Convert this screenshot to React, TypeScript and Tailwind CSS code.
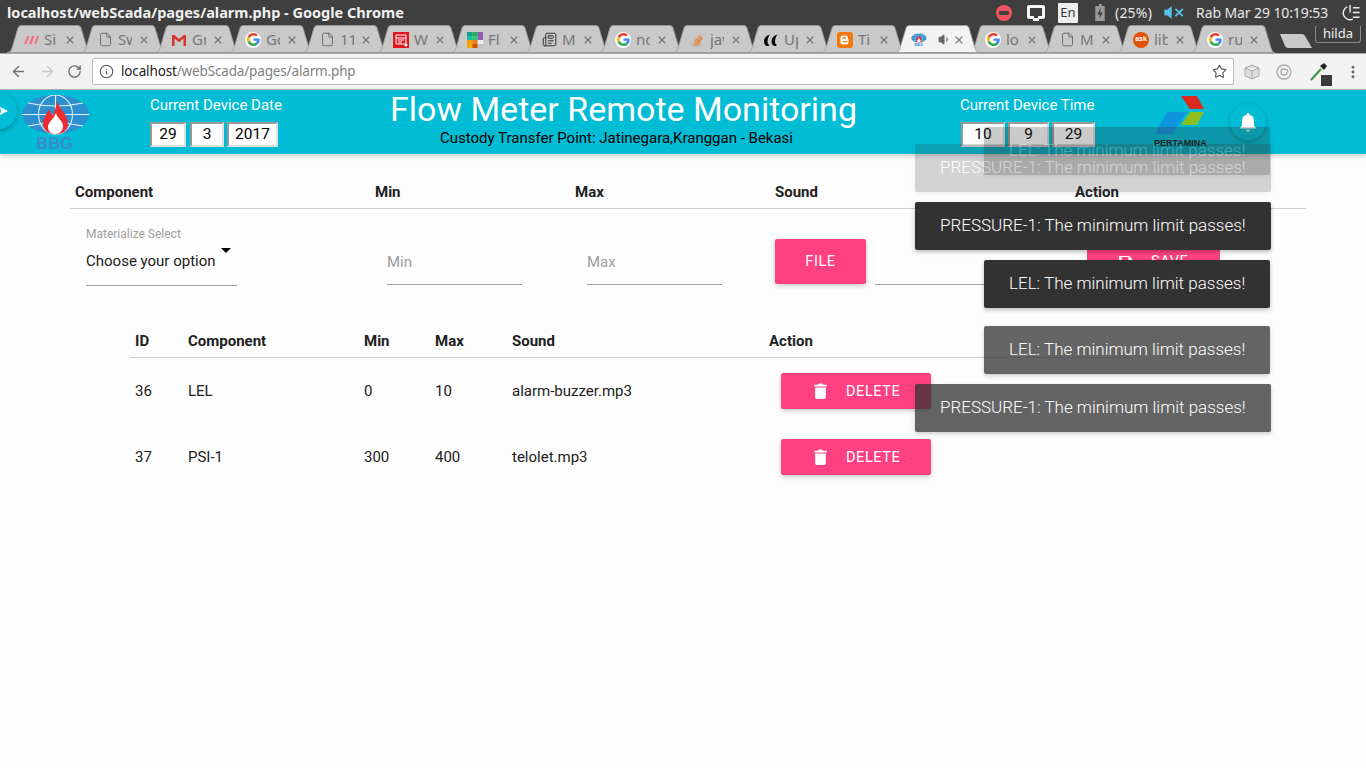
import { ArrowLeft, ArrowRight, File, Info, MoreVertical, Newspaper, RotateCw, Star, Volume1, X } from "lucide-react";
import type { ReactNode } from "react";

function GoogleIcon() {
  return (
    <span className="flex h-4 w-4 items-center justify-center rounded-full bg-white">
      <svg viewBox="0 0 48 48" className="h-[13px] w-[13px]">
        <path fill="#EA4335" d="M24 9.5c3.5 0 6.7 1.2 9.2 3.6l6.9-6.9C35.9 2.4 30.5 0 24 0 14.6 0 6.5 5.4 2.6 13.2l8 6.2C12.4 13.7 17.7 9.5 24 9.5z" />
        <path fill="#4285F4" d="M46.98 24.55c0-1.57-.15-3.09-.38-4.55H24v9.02h12.94c-.58 2.96-2.26 5.48-4.78 7.18l7.73 6c4.51-4.18 7.09-10.36 7.09-17.65z" />
        <path fill="#FBBC05" d="M10.53 28.59c-.48-1.45-.76-2.99-.76-4.59s.27-3.14.76-4.59l-7.98-6.19C.92 16.46 0 20.12 0 24c0 3.88.92 7.54 2.56 10.78l7.97-6.19z" />
        <path fill="#34A853" d="M24 48c6.48 0 11.93-2.13 15.89-5.81l-7.73-6c-2.15 1.45-4.92 2.3-8.16 2.3-6.26 0-11.57-4.22-13.47-9.91l-7.98 6.19C6.51 42.62 14.62 48 24 48z" />
      </svg>
    </span>
  );
}

function PageIcon() {
  return <File className="h-[15px] w-[15px] text-[#5a5a5a]" strokeWidth={1.3} />;
}

function BbgLogo({ small }: { small?: boolean }) {
  return (
    <svg viewBox="0 0 70 56" className={small ? "h-4 w-4" : "h-[56px] w-[70px]"}>
      <ellipse cx="34.5" cy="19.5" rx="33.5" ry="19.5" fill="#2b8fd0" />
      <g fill="none" stroke="#e4f3fb" strokeWidth="1.1">
        <ellipse cx="34.5" cy="19.5" rx="17" ry="19.5" />
        <path d="M34.5 0v39M1 19.5h67M7 8q27 6 55 0M7 31q27-6 55 0" />
      </g>
      <path d="M36 5C37 13 47 19 47 29 47 36 41 39 34 39 27 39 22 35 22 28 22 22 26 19 28 14 29 17 30 19 32 20 34 15 36 10 36 5Z" fill="#ee2b30" />
      <path d="M35 18C36 23 42 26 42 31 42 36 38 39 34 39 30 39 27 36 27 32 27 27 33 24 35 18Z" fill="#fff" />
      <text x="34" y="54" textAnchor="middle" fontFamily="Liberation Sans, sans-serif" fontWeight="700" fontSize="16" letterSpacing="0.5" fill="#3f88cc">BBG</text>
    </svg>
  );
}

const tabs: { label: string; icon: ReactNode }[] = [
  {
    label: "Si",
    icon: (
      <svg viewBox="0 0 16 16" className="h-4 w-4">
        <path d="M1 12 4 4h2.5l-3 8zM6 12l3-8h2.5l-3 8zM11 12l3-8h2l-3 8z" fill="#f4727f" />
      </svg>
    ),
  },
  { label: "Sw", icon: <PageIcon /> },
  {
    label: "Gr",
    icon: (
      <svg viewBox="0 0 16 16" className="h-4 w-4">
        <path d="M1 3h2.4L8 7l4.6-4H15v11h-2.5V6.5L8 10.3 3.5 6.5V14H1z" fill="#d0392b" />
      </svg>
    ),
  },
  { label: "Go", icon: <GoogleIcon /> },
  { label: "11", icon: <PageIcon /> },
  {
    label: "W",
    icon: (
      <svg viewBox="0 0 16 16" className="h-4 w-4">
        <rect width="16" height="16" fill="#e0141f" />
        <path d="M3 3h10v9H3z" fill="none" stroke="#fff" strokeWidth="1" />
        <path d="M3 6h10M5 8h6M5 10h4" stroke="#fff" strokeWidth="1" />
        <circle cx="13" cy="13" r="1.5" fill="#fff" />
      </svg>
    ),
  },
  {
    label: "Fl",
    icon: (
      <svg viewBox="0 0 16 16" className="h-4 w-4">
        <rect x="0" y="0" width="5.4" height="4" fill="#16a085" />
        <rect x="5.4" y="0" width="5.3" height="4" fill="#27ae60" />
        <rect x="10.7" y="0" width="5.3" height="4" fill="#8e5bb5" />
        <rect x="0" y="4" width="5.4" height="4" fill="#1abc9c" />
        <rect x="5.4" y="4" width="5.3" height="4" fill="#2ecc71" />
        <rect x="10.7" y="4" width="5.3" height="4" fill="#9b59b6" />
        <rect x="0" y="8" width="5.4" height="4" fill="#f39c12" />
        <rect x="5.4" y="8" width="5.3" height="4" fill="#e67e22" />
        <rect x="10.7" y="8" width="5.3" height="4" fill="#ecf0f1" />
        <rect x="0" y="12" width="5.4" height="4" fill="#f1a90f" />
        <rect x="5.4" y="12" width="5.3" height="4" fill="#d35400" />
        <rect x="10.7" y="12" width="5.3" height="4" fill="#bdc3c7" />
      </svg>
    ),
  },
  { label: "M", icon: <Newspaper className="h-[15px] w-[15px] text-[#333]" strokeWidth={1.6} /> },
  { label: "nc", icon: <GoogleIcon /> },
  {
    label: "jav",
    icon: (
      <svg viewBox="0 0 16 16" className="h-4 w-4" fill="none" stroke="#e8813a" strokeWidth="1.2">
        <path d="M2.5 10v4.5h10V10" stroke="#bcbbbb" />
        <path d="M4.5 12.8h6M4.7 10.8l6 .5M5.3 8.7l5.8 1.5M6.5 6.6l5.2 2.8M8.3 4.5l4.3 3.8M10.5 2.8l3 4.5" />
      </svg>
    ),
  },
  {
    label: "Up",
    icon: (
      <svg viewBox="0 0 16 16" className="h-4 w-4">
        <path d="M7 2.5C3.5 3.5 1 6 1 9.5 1 12 2.5 14 4.5 14c1 0 1.7-.5 2.200-1C5 12.5 4.5 11 4.5 9.5 4.5 7 5.5 4.5 7 2.5z" />
        <path d="M14.5 2.5C11 3.5 8.5 6 8.5 9.5c0 2.5 1.5 4.5 3.5 4.5 1 0 1.700-.5 2.200-1-1.700-.5-2.200-2-2.200-3.500 0-2.500 1-5 2.500-7z" />
      </svg>
    ),
  },
  {
    label: "Ti",
    icon: (
      <svg viewBox="0 0 16 16" className="h-4 w-4">
        <rect width="16" height="16" rx="3" fill="#f5780f" />
        <path d="M5.5 3.5h3.2a2.5 2.5 0 0 1 2.3 2.5v1h.5v3a2.5 2.5 0 0 1-2.5 2.5H6A2.5 2.5 0 0 1 3.5 10V5.5a2 2 0 0 1 2-2z" fill="#fff" />
        <path d="M6 6h2.5M6 9.7h4" stroke="#f5780f" strokeWidth="1.3" strokeLinecap="round" />
      </svg>
    ),
  },
  { label: "", icon: <BbgLogo small /> },
  { label: "lo", icon: <GoogleIcon /> },
  { label: "M", icon: <PageIcon /> },
  {
    label: "lib",
    icon: (
      <span className="flex h-4 w-4 items-center justify-center rounded-full bg-[#e25000] font-['Liberation_Sans',sans-serif] text-[7px] font-bold text-white">
        ask
      </span>
    ),
  },
  { label: "ru", icon: <GoogleIcon /> },
];

function Tab({ label, icon, active }: { label: string; icon: ReactNode; active?: boolean }) {
  return (
    <div className={`relative -mr-[10px] flex h-[28px] w-[84px] shrink-0 items-center pt-px ${active ? "z-10" : ""}`}>
      <svg viewBox="0 0 84 28" className="absolute inset-0 h-full w-full">
        <path
          d="M0 27.5C3 27.5 4 26 5 23L11 3C11.5 1.5 12.5.5 14 .5H71C72.5.5 73.5 1.5 74 3L80 23C81 26 82 27.5 84 27.5Z"
          fill={active ? "#f2f2f2" : "#c9c9c9"}
          stroke="#9a9a9a"
          strokeWidth="0.8"
        />
      </svg>
      <span className="relative ml-[16px] flex w-4 shrink-0 justify-center">{icon}</span>
      {active ? (
        <Volume1 className="relative ml-[11px] h-[13px] w-[13px] text-[#666]" fill="#666" />
      ) : (
        <span className="relative ml-[5px] w-[14px] overflow-hidden whitespace-nowrap text-[15px] text-[#767676]">{label}</span>
      )}
      <X className={`relative h-3 w-3 text-[#737373] ${active ? "ml-[2px]" : "ml-[6px]"}`} strokeWidth={2.2} />
    </div>
  );
}

function TitleBar() {
  return (
    <div className="flex h-[25px] items-center bg-[#3f3f3f] pl-[7px] text-white">
      <span className="w-[950px] text-[14.5px] font-bold leading-none text-[#f0f0f0]">localhost/webScada/pages/alarm.php - Google Chrome</span>
      <div className="ml-[39px] flex h-full items-center text-[#e8e8e8]">
        <span className="flex h-[16px] w-[16px] items-center justify-center rounded-full bg-[#ef5360]">
          <span className="h-[4px] w-[10px] rounded-[1px] bg-[#3f3f3f]" />
        </span>
        <svg viewBox="0 0 18 16" className="ml-[15px] h-4 w-[18px]">
          <path d="M2 0h14a2 2 0 0 1 2 2v10a2 2 0 0 1-2 2h-4v2H6v-2H2a2 2 0 0 1-2-2V2a2 2 0 0 1 2-2z" fill="#f4f4f4" />
          <path d="M3 3h12v8h-4v2H7v-2H3z" fill="#3f3f3f" />
        </svg>
        <span className="ml-[13px] flex h-[20px] w-[20px] items-center justify-center rounded-[1px] bg-[#efefef] text-[13px] text-[#3a3a3a]">En</span>
        <svg viewBox="0 0 12 18" className="ml-[16px] h-[17px] w-[12px]">
          <path d="M3 2h2V0h3v2h3v16H1V2z" fill="#9a9a9a" />
          <path d="M7 4 3 11h3l-1 5 4-7H6z" fill="#3f3f3f" />
        </svg>
        <span className="ml-[9px] text-[14px] tracking-[0.2px]">(25%)</span>
        <svg viewBox="0 0 22 14" className="ml-[12px] h-[13px] w-[21px]">
          <path d="M0 4h3l5-4v14l-5-4H0z" fill="#58c3e8" />
          <path d="m12 3 8 8m0-8-8 8" stroke="#58c3e8" strokeWidth="2" />
        </svg>
        <span className="ml-[11px] whitespace-nowrap text-[14px] tracking-[-0.1px]">Rab Mar 29 10:19:53</span>
        <svg viewBox="0 0 18 18" className="ml-[14px] h-[17px] w-[18px]" fill="none" stroke="#f0f0f0" strokeWidth="1.5">
          <path d="M5 3a7 7 0 1 0 6 13" />
          <path d="M8 1v8M11 4h7M11 9h7M11 14h7" />
        </svg>
      </div>
    </div>
  );
}

function TabStrip() {
  return (
    <div className="relative flex h-[28px] bg-[#3f3f3f] pl-[7px]">
      {tabs.map((t, i) => (
        <Tab key={i} label={t.label} icon={t.icon} active={i === 12} />
      ))}
      <svg viewBox="0 0 34 16" className="ml-[14px] mt-[8px] h-4 w-[34px]">
        <path d="M1 1h22q2 0 3 2l7 12H9q-2 0-3-2z" fill="#c9c9c9" />
      </svg>
      <span className="ml-[2px] mt-[1px] flex h-[17px] w-[46px] items-center justify-center rounded-b-[3px] border border-t-0 border-[#8a8a8a] text-[13px] text-[#eee]">
        hilda
      </span>
    </div>
  );
}

function Toolbar() {
  return (
    <div className="flex h-[37px] items-center border-t border-b border-t-[#a8a8a8] border-b-[#b5b5b5] bg-[#f2f2f2]">
      <ArrowLeft className="ml-[10px] h-[17px] w-[17px] text-[#6e6e6e]" strokeWidth={2} />
      <ArrowRight className="ml-[12px] h-[17px] w-[17px] text-[#c8c8c8]" strokeWidth={2} />
      <RotateCw className="ml-[11px] h-[15px] w-[15px] text-[#6e6e6e]" strokeWidth={2.2} />
      <div className="ml-[10px] flex h-[27px] w-[1142px] items-center rounded-[2px] border border-[#bdbdbd] bg-white">
        <Info className="ml-[6px] h-[15px] w-[15px] text-[#555]" strokeWidth={1.8} />
        <span className="ml-[7px] text-[13.5px] tracking-[-0.15px] text-[#222]">
          localhost<span className="text-[#808080]">/webScada/pages/alarm.php</span>
        </span>
        <Star className="ml-auto mr-[6px] h-[15px] w-[15px] text-[#555]" strokeWidth={1.8} />
      </div>
      <svg viewBox="0 0 16 16" className="ml-[10px] h-4 w-4" fill="#dedede" stroke="#a9a9a9" strokeWidth="1">
        <path d="M8 1 15 4v8l-7 3-7-3V4zM1 4l7 3 7-3M8 7v8" />
      </svg>
      <svg viewBox="0 0 16 16" className="ml-[16px] h-4 w-4" fill="none" stroke="#a9a9a9" strokeWidth="1.3">
        <circle cx="8" cy="8" r="7" />
        <path d="M11 8a3 3 0 1 1-3-3c2.5 0 4 1.5 4 3.5" />
      </svg>
      <div className="relative ml-[18px] h-[20px] w-[20px]">
        <svg viewBox="0 0 20 20" className="h-full w-full">
          <path d="M1 18 11 7" stroke="#3f8a3f" strokeWidth="2" />
          <path d="m10 4 4-3 3 3-3 4z" fill="#222" />
        </svg>
        <span className="absolute bottom-[-4px] right-[-2px] h-[11px] w-[11px] bg-[#3a3a3a]" />
      </div>
      <MoreVertical className="ml-[15px] h-[16px] w-[16px] text-[#666]" strokeWidth={2.4} />
    </div>
  );
}

function DateBox({ value, w }: { value: string; w: string }) {
  return (
    <span className={`flex h-[25px] items-center justify-center border-2 border-b-[#e0e0e0] border-l-[#9a9a9a] border-r-[#e0e0e0] border-t-[#9a9a9a] bg-white text-[15.5px] text-black ${w}`}>
      {value}
    </span>
  );
}

function PageHeader() {
  return (
    <div className="relative z-10 flex h-[64px] bg-[#00bcd4] font-['Roboto',sans-serif] text-white shadow-[0_2px_5px_rgba(0,0,0,0.2)]">
      <div className="relative w-[150px] shrink-0">
        <span className="absolute left-[-19px] top-[3px] flex h-9 w-9 items-center justify-end rounded-full bg-[#00bcd4] pr-[9px] shadow-[0_2px_5px_rgba(0,0,0,0.25)]">
          <svg viewBox="0 0 8 8" className="h-2 w-2"><path d="M0 0l8 4-8 4 1-4z" fill="#fff" /></svg>
        </span>
        <div className="ml-[21px] mt-[5px]"><BbgLogo /></div>
      </div>
      <div className="w-[240px] shrink-0 pt-[6px]">
        <div className="text-[15px] leading-[18px]">Current Device Date</div>
        <div className="mt-[8px] flex">
          <DateBox value="29" w="w-[36px]" />
          <DateBox value="3" w="ml-[4px] w-[34px]" />
          <DateBox value="2017" w="ml-[3px] w-[51px]" />
        </div>
      </div>
      <div className="-mt-px w-[466px] shrink-0">
        <div className="whitespace-nowrap text-center text-[34px] leading-[40px]">Flow Meter Remote Monitoring</div>
        <div className="pr-[13px] text-center text-[15px] leading-[18px] whitespace-nowrap text-black">Custody Transfer Point: Jatinegara,Kranggan - Bekasi</div>
      </div>
      <div className="ml-[104px] w-[193px] shrink-0 pt-[6px]">
        <div className="text-[15px] leading-[18px]">Current Device Time</div>
        <div className="mt-[8px] flex gap-[3px] pl-px">
          <DateBox value="10" w="w-[44px]" />
          <DateBox value="9" w="w-[41px]" />
          <DateBox value="29" w="w-[43px]" />
        </div>
      </div>
      <div className="w-[54px] shrink-0 pt-[6px]">
        <svg viewBox="0 0 54 38" className="h-[38px] w-[54px]">
          <path d="M28 0h16l7 13H37z" fill="#dc2a1f" />
          <path d="M14 16h20L19 38H2z" fill="#0f93dc" />
          <path d="M37 16h14l-7 13H28z" fill="#8cc022" />
        </svg>
        <div className="mt-[4px] pl-px font-['Liberation_Sans',sans-serif] text-[9px] leading-[10px] font-bold whitespace-nowrap text-[#1a1a1a]">PERTAMINA</div>
      </div>
      <span className="ml-[23px] mt-[14px] flex h-9 w-9 items-center justify-center rounded-full bg-[#00bcd4] shadow-[0_2px_5px_rgba(0,0,0,0.25)]">
        <svg viewBox="0 0 24 24" className="h-[22px] w-[22px]" fill="#fff">
          <path d="M12 2a1.5 1.5 0 0 0-1.5 1.5v.7A6.5 6.5 0 0 0 5.500 10.500V16l-2 2v1h17v-1l-2-2v-5.500a6.500 6.500 0 0 0-5-6.300v-.7A1.500 1.500 0 0 0 12 2z" />
          <path d="M10 20.500a2 2 0 0 0 4 0z" />
        </svg>
      </span>
    </div>
  );
}

function TrashIcon() {
  return (
    <svg viewBox="0 0 14 18" className="h-[16px] w-[13px]" fill="#fff">
      <path d="M1 5h12v11a2 2 0 0 1-2 2H3a2 2 0 0 1-2-2zM0 2h4l1-1.5h4L10 2h4v2H0z" />
    </svg>
  );
}

function DeleteButton() {
  return (
    <button className="ml-[12px] flex h-9 w-[150px] items-center rounded-[2px] bg-[#ff4081] pl-[33px] text-[14.5px] tracking-[0.6px] text-white shadow-[0_2px_5px_rgba(0,0,0,0.2)]">
      <TrashIcon />
      <span className="ml-[19px] pt-px">DELETE</span>
    </button>
  );
}

const alarmRows = [
  { id: "36", component: "LEL", min: "0", max: "10", sound: "alarm-buzzer.mp3" },
  { id: "37", component: "PSI-1", min: "300", max: "400", sound: "telolet.mp3" },
];

const rowCols = "grid grid-cols-[53px_176px_71px_77px_257px_1fr] px-[5px]";

function AlarmPage() {
  return (
    <div className="text-[15px] text-[#212121]">
      <div className="ml-[70px] mt-[24px] w-[1236px]">
        <div className="grid h-[31px] grid-cols-[300px_200px_200px_300px_1fr] border-b border-[#cfcfcf] px-[5px] font-bold leading-[28px]">
          <span>Component</span>
          <span>Min</span>
          <span>Max</span>
          <span>Sound</span>
          <span>Action</span>
        </div>
        <div className="flex h-[77px] items-start">
          <div className="ml-[16px] w-[151px] border-b border-[#9e9e9e] pt-[17px]">
            <div className="text-[12px] leading-[16px] text-[#9e9e9e]">Materialize Select</div>
            <div className="relative h-[43px] pt-[7px] leading-[24px]">
              Choose your option
              <span className="absolute right-[6px] top-[6px] h-0 w-0 border-x-[5.5px] border-t-[5px] border-x-transparent border-t-black" />
            </div>
          </div>
          <div className="ml-[150px] mt-[30px] h-[46px] w-[135px] border-b border-[#9e9e9e] pt-[11px] leading-[24px] text-[#9e9e9e]">Min</div>
          <div className="ml-[65px] mt-[30px] h-[46px] w-[135px] border-b border-[#9e9e9e] pt-[11px] leading-[24px] text-[#9e9e9e]">Max</div>
          <button className="ml-[53px] mt-[30px] h-[45px] w-[91px] rounded-[2px] bg-[#ff4081] text-[14.5px] tracking-[0.6px] text-white shadow-[0_2px_5px_rgba(0,0,0,0.2)]">FILE</button>
          <div className="ml-[9px] mt-[75px] h-px w-[190px] bg-[#9e9e9e]" />
          <button className="ml-[22px] mt-[35px] flex h-9 w-[133px] items-center rounded-[2px] bg-[#ff4081] pl-[31px] text-[14.5px] tracking-[0.6px] text-white">
            <svg viewBox="0 0 16 16" className="h-[15px] w-[15px]" fill="#fff"><path d="M1 1h11l3 3v11H1zM4 2v4h7V2zM4 9v5h8V9z" /></svg>
            <span className="ml-[18px]">SAVE</span>
          </button>
        </div>
      </div>
      <div className="ml-[130px] mt-[39px] w-[1000px]">
        <div className={`${rowCols} h-[33px] border-b border-[#cfcfcf] font-bold leading-[32px]`}>
          <span>ID</span>
          <span>Component</span>
          <span>Min</span>
          <span>Max</span>
          <span>Sound</span>
          <span>Action</span>
        </div>
        {alarmRows.map((r) => (
          <div key={r.id} className={`${rowCols} h-[66px] items-center`}>
            <span>{r.id}</span>
            <span>{r.component}</span>
            <span>{r.min}</span>
            <span>{r.max}</span>
            <span>{r.sound}</span>
            <DeleteButton />
          </div>
        ))}
      </div>
    </div>
  );
}

const toasts = [
  { text: "LEL: The minimum limit passes!", top: "top-[127px]", left: "left-[984px]", op: "opacity-[0.25]" },
  { text: "PRESSURE-1: The minimum limit passes!", top: "top-[144px]", left: "left-[915px]", op: "opacity-[0.2]" },
  { text: "PRESSURE-1: The minimum limit passes!", top: "top-[202px]", left: "left-[915px]", op: "opacity-100" },
  { text: "LEL: The minimum limit passes!", top: "top-[260px]", left: "left-[984px]", op: "opacity-100" },
  { text: "LEL: The minimum limit passes!", top: "top-[326px]", left: "left-[984px]", op: "opacity-75" },
  { text: "PRESSURE-1: The minimum limit passes!", top: "top-[384px]", left: "left-[915px]", op: "opacity-75" },
];

export default function App() {
  return (
    <div className="relative h-[768px] w-[1366px] overflow-hidden bg-[#fdfdfd] font-['Noto_Sans',sans-serif]">
      <TitleBar />
      <TabStrip />
      <Toolbar />
      <PageHeader />
      <div className="font-['Roboto',sans-serif]">
        <AlarmPage />
      </div>
      {toasts.map((t, i) => (
        <div
          key={i}
          className={`absolute z-20 flex h-12 w-[max-content] items-center whitespace-nowrap rounded-[2px] bg-[#323232] px-[25px] font-['Roboto',sans-serif] text-[17px] font-light text-white shadow-[0_2px_4px_rgba(0,0,0,0.25)] ${t.top} ${t.left} ${t.op}`}
        >
          {t.text}
        </div>
      ))}
    </div>
  );
}
